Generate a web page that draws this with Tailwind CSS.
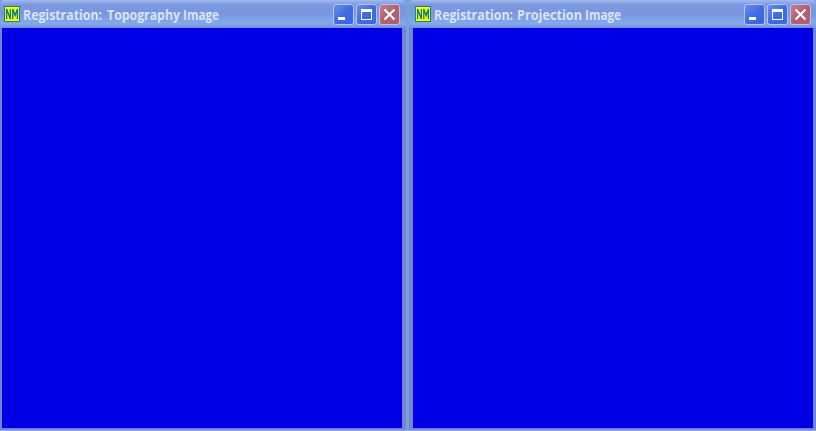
<!DOCTYPE html>
<html lang="en"><head><meta charset="utf-8"><title>Registration</title>
<script src="https://cdn.jsdelivr.net/npm/@tailwindcss/browser@4"></script></head>
<body class="w-[816px] h-[431px] overflow-hidden bg-[#74a6d4] flex justify-between">
<svg class="absolute w-0 h-0">
<defs>
<linearGradient id="b" x1="0" y1="0" x2="1" y2="1"><stop offset="0" stop-color="#6c91ee"/><stop offset=".5" stop-color="#416be3"/><stop offset="1" stop-color="#3765e2"/></linearGradient>
<linearGradient id="r" x1="0" y1="0" x2="1" y2="1"><stop offset="0" stop-color="#c18293"/><stop offset=".5" stop-color="#b0606f"/><stop offset="1" stop-color="#aa6274"/></linearGradient>
<symbol id="nm" viewBox="0 0 16 16"><path fill="#078987" d="M0 0h16v16H0z"/><path fill="#ffff08" d="M1 1h14v14H1z"/><path fill="none" stroke="#078080" stroke-width="1.35" d="M2.6 13V3L6.4 13V3M8.8 13V3L11.1 9.5L13.4 3V13"/></symbol>
<symbol id="min" viewBox="0 0 21 21"><rect x=".5" y=".5" width="20" height="20" rx="2.5" fill="url(#b)" stroke="#b3c5ef"/><path fill="#fff" d="M5 13h7v3H5z"/></symbol>
<symbol id="max" viewBox="0 0 21 21"><rect x=".5" y=".5" width="20" height="20" rx="2.5" fill="url(#b)" stroke="#b3c5ef"/><path fill="#fff" fill-rule="evenodd" d="M5 5h11v11H5zM6 8v7h9V8z"/></symbol>
<symbol id="close" viewBox="0 0 21 21"><rect x=".5" y=".5" width="20" height="20" rx="2.5" fill="url(#r)" stroke="#c5bfdf"/><path stroke="#fff" stroke-width="2.1" d="M5.5 5.5l10 10M15.5 5.5l-10 10"/></symbol>
</defs></svg>

<section class="w-[406px] h-[431px] flex flex-col bg-[#7483d6] border-b border-[#99aae8] rounded-t-[4px] overflow-hidden">
<header class="h-[28px] shrink-0 flex items-start pl-[4px] pr-[6px] bg-[linear-gradient(180deg,#a0baef_0px,#91abeb_2px,#7b98df_5px,#7996df_13px,#7da2e7_19px,#82a9ec_23px,#7f9be2_26px,#7487d8_28px)]">
<svg class="w-4 h-4 mt-[6px] shrink-0"><use href="#nm"/></svg>
<h1 class="ml-[3px] mt-[6px] grow whitespace-nowrap font-['Open_Sans','Noto_Sans',sans-serif] font-bold text-[13.5px] leading-[18px] text-[#d8e4f8]"><svg class="h-[18px] w-[210px] overflow-visible" fill="currentColor"><text x="0" y="14" textLength="79" lengthAdjust="spacingAndGlyphs">Registration:</text><text x="84" y="14" textLength="73" lengthAdjust="spacingAndGlyphs">Topography</text><text x="160" y="14" textLength="36" lengthAdjust="spacingAndGlyphs">Image</text></svg></h1>
<div class="flex gap-[2px] mt-[4px]"><svg class="w-[21px] h-[21px]"><use href="#min"/></svg><svg class="w-[21px] h-[21px]"><use href="#max"/></svg><svg class="w-[21px] h-[21px]"><use href="#close"/></svg></div>
</header>
<main class="ml-[2px] w-[400px] h-[400px] bg-[#0000e4]"></main>
</section>

<section class="w-[407px] h-[431px] flex flex-col bg-[#7483d6] border-b border-[#99aae8] rounded-t-[4px] overflow-hidden">
<header class="h-[28px] shrink-0 flex items-start pl-[6px] pr-[5px] bg-[linear-gradient(180deg,#a0baef_0px,#91abeb_2px,#7b98df_5px,#7996df_13px,#7da2e7_19px,#82a9ec_23px,#7f9be2_26px,#7487d8_28px)]">
<svg class="w-4 h-4 mt-[6px] shrink-0"><use href="#nm"/></svg>
<h1 class="ml-[3px] mt-[6px] grow whitespace-nowrap font-['Open_Sans','Noto_Sans',sans-serif] font-bold text-[13.5px] leading-[18px] text-[#d8e4f8]"><svg class="h-[18px] w-[210px] overflow-visible" fill="currentColor"><text x="0" y="14" textLength="79" lengthAdjust="spacingAndGlyphs">Registration:</text><text x="83" y="14" textLength="65" lengthAdjust="spacingAndGlyphs">Projection</text><text x="151" y="14" textLength="36" lengthAdjust="spacingAndGlyphs">Image</text></svg></h1>
<div class="flex gap-[2px] mt-[4px]"><svg class="w-[21px] h-[21px]"><use href="#min"/></svg><svg class="w-[21px] h-[21px]"><use href="#max"/></svg><svg class="w-[21px] h-[21px]"><use href="#close"/></svg></div>
</header>
<main class="ml-[4px] w-[400px] h-[400px] bg-[#0000e4]"></main>
</section>
</body></html>
